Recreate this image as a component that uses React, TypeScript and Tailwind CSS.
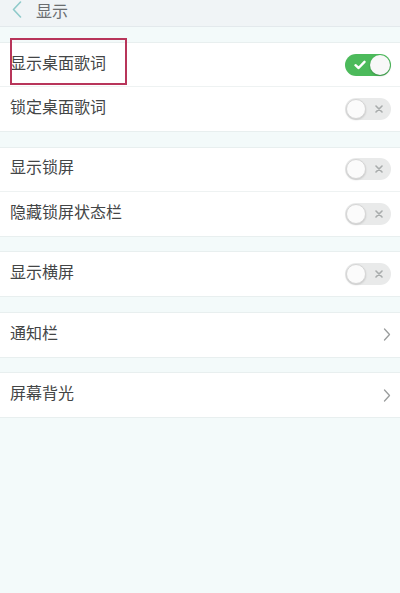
import React from 'react';

const font = { fontFamily: '"Noto Sans CJK SC", "Noto Sans", sans-serif' };

const Toggle: React.FC<{ on?: boolean }> = ({ on }) =>
    on ? (
        <div className="relative w-[46px] h-[22px] rounded-full bg-[#4cba5b] flex items-center justify-end pr-[1px]">
            <svg className="absolute left-[9px] top-[6px]" width="12" height="10" viewBox="0 0 12 10">
                <path d="M1.5 5.2 L4.6 8 L10.5 1.8" fill="none" stroke="#fff" strokeWidth="2.4" strokeLinecap="round" strokeLinejoin="round" />
            </svg>
            <div className="w-[20px] h-[20px] rounded-full bg-[#f8f8f8] shadow-[0_1px_2px_rgba(0,0,0,0.25)]" />
        </div>
    ) : (
        <div className="relative w-[46px] h-[22px] rounded-full bg-[#e9eaea] flex items-center pl-[1px]">
            <div className="w-[20px] h-[20px] rounded-full bg-[#fbfbfb] border border-[#d6d6d6] shadow-[0_1px_2px_rgba(0,0,0,0.15)]" />
            <svg className="absolute right-[8px] top-[7px]" width="8" height="8" viewBox="0 0 8 8">
                <path d="M1 1 L7 7 M7 1 L1 7" stroke="#a9acac" strokeWidth="1.6" strokeLinecap="round" />
            </svg>
        </div>
    );

const Chevron = () => (
    <svg width="8" height="13" viewBox="0 0 8 13">
        <path d="M1.5 1 L6.5 6.5 L1.5 12" fill="none" stroke="#9a9d9d" strokeWidth="1.3" strokeLinecap="round" strokeLinejoin="round" />
    </svg>
);

const Row: React.FC<{ label: string; last?: boolean; children: React.ReactNode }> = ({ label, last, children }) => (
    <div className={`h-[44px] flex items-center justify-between pl-[10px] pr-[9px] bg-white ${last ? '' : 'border-b border-[#eef2f2]'}`}>
        <span className="text-[16px] text-[#434546] leading-[18px] mb-[6px]">{label}</span>
        {children}
    </div>
);

const Section: React.FC<{ children: React.ReactNode }> = ({ children }) => (
    <div className="bg-white border-t border-[#e8efef] shadow-[0_1px_0_#e8efef]">{children}</div>
);

export default function App() {
    return (
        <div className="w-[400px] h-[593px] bg-[#f3fafa] overflow-hidden relative" style={font}>
            <div className="h-[27px] bg-[#f0f4f6] border-b border-[#e3e9ec] flex items-start pl-[12px] pt-[1px] gap-[14px]">
                <svg width="10" height="17" viewBox="0 0 10 17">
                    <path d="M8.5 1 L1.5 8.5 L8.5 16" fill="none" stroke="#8fcaca" strokeWidth="1.6" strokeLinecap="round" strokeLinejoin="round" />
                </svg>
                <span className="text-[16px] text-[#6a6d6f] leading-[18px]">显示</span>
            </div>

            <div className="pt-[15px] flex flex-col gap-[15.5px]">
                <Section>
                    <Row label="显示桌面歌词"><Toggle on /></Row>
                    <Row label="锁定桌面歌词" last><Toggle /></Row>
                </Section>
                <Section>
                    <Row label="显示锁屏"><Toggle /></Row>
                    <Row label="隐藏锁屏状态栏" last><Toggle /></Row>
                </Section>
                <Section>
                    <Row label="显示横屏" last><Toggle /></Row>
                </Section>
                <Section>
                    <Row label="通知栏" last><Chevron /></Row>
                </Section>
                <Section>
                    <Row label="屏幕背光" last><Chevron /></Row>
                </Section>
            </div>

            <div className="absolute left-[10px] top-[38px] w-[117px] h-[47px] border-2 border-[#b8355a] pointer-events-none" />
        </div>
    );
}
